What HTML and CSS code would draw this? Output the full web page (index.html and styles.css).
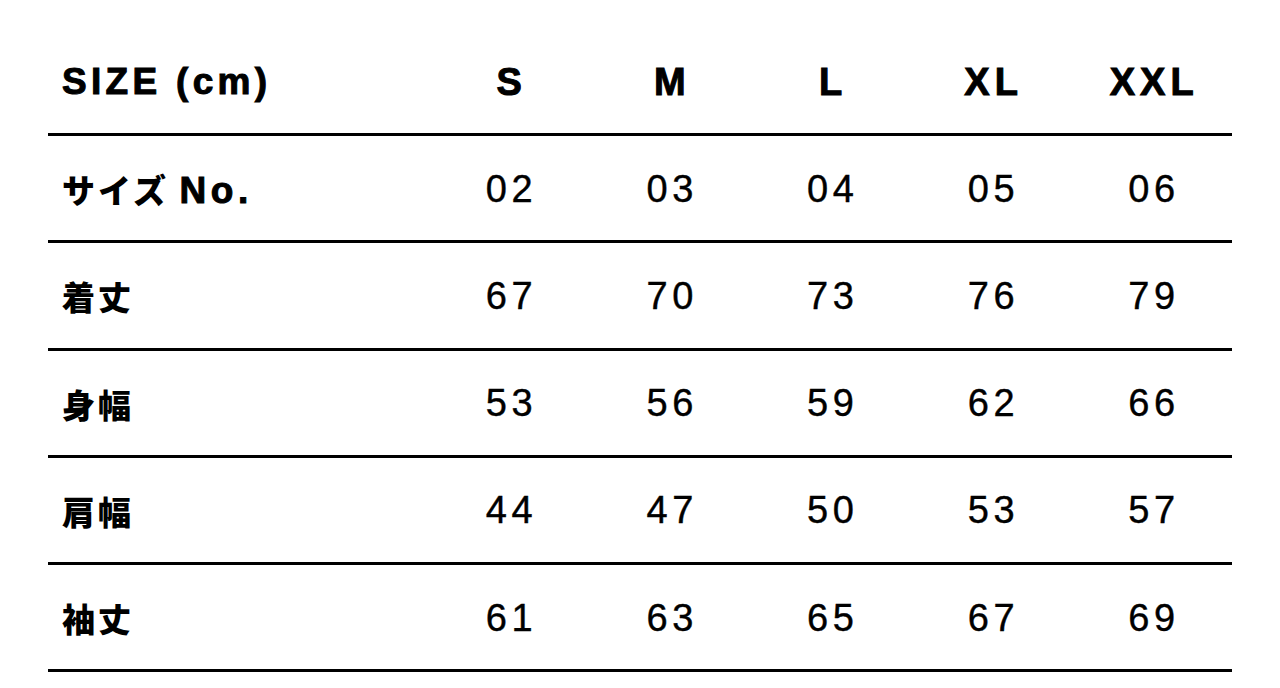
FILE: index.html
```html
<!DOCTYPE html>
<html lang="ja">
<head>
<meta charset="utf-8">
<link rel="stylesheet" href="styles.css">
</head>
<body>
<div class="table">
  <div class="row head">
    <div class="label">SIZE (cm)</div>
    <div class="cell">S</div>
    <div class="cell">M</div>
    <div class="cell">L</div>
    <div class="cell">XL</div>
    <div class="cell">XXL</div>
  </div>
  <div class="row">
    <div class="label jp">サイズ <span class="lat">No.</span></div>
    <div class="cell">02</div>
    <div class="cell">03</div>
    <div class="cell">04</div>
    <div class="cell">05</div>
    <div class="cell">06</div>
  </div>
  <div class="row">
    <div class="label jp">着丈</div>
    <div class="cell">67</div>
    <div class="cell">70</div>
    <div class="cell">73</div>
    <div class="cell">76</div>
    <div class="cell">79</div>
  </div>
  <div class="row">
    <div class="label jp">身幅</div>
    <div class="cell">53</div>
    <div class="cell">56</div>
    <div class="cell">59</div>
    <div class="cell">62</div>
    <div class="cell">66</div>
  </div>
  <div class="row">
    <div class="label jp">肩幅</div>
    <div class="cell">44</div>
    <div class="cell">47</div>
    <div class="cell">50</div>
    <div class="cell">53</div>
    <div class="cell">57</div>
  </div>
  <div class="row">
    <div class="label jp">袖丈</div>
    <div class="cell">61</div>
    <div class="cell">63</div>
    <div class="cell">65</div>
    <div class="cell">67</div>
    <div class="cell">69</div>
  </div>
</div>
</body>
</html>
```

FILE: styles.css
```css
html, body {
  margin: 0;
  padding: 0;
  background: #fff;
}
body {
  color: #000;
  font-family: "Liberation Sans", Arial, sans-serif;
}
.table {
  margin: 0 48px;
  padding-top: 29px;
}
.row {
  display: grid;
  grid-template-columns: 381px repeat(5, 1fr);
  height: 107.2px;
  box-sizing: border-box;
  border-bottom: 3px solid #000;
  align-items: center;
}
.label {
  padding-left: 14px;
  font-weight: 700;
  font-size: 37px;
  letter-spacing: 4.3px;
  white-space: nowrap;
  -webkit-text-stroke: 1px #000;
}
.label.jp {
  font-family: "Noto Sans CJK JP", "Liberation Sans", sans-serif;
  font-weight: 900;
  font-size: 33px;
  letter-spacing: 3px;
  -webkit-text-stroke: 0;
}
.label .lat {
  font-family: "Liberation Sans", Arial, sans-serif;
  font-weight: 700;
  font-size: 37px;
  letter-spacing: 4.5px;
  -webkit-text-stroke: 1px #000;
}
.cell {
  text-align: center;
  font-size: 38px;
  letter-spacing: 4.6px;
  padding-left: 4.6px;
  -webkit-text-stroke: 0.4px #000;
}
.head .cell {
  font-weight: 700;
  font-size: 38px;
  letter-spacing: 5px;
  padding-left: 5px;
  -webkit-text-stroke: 1px #000;
}
.row > div {
  padding-top: 2px;
}
```
